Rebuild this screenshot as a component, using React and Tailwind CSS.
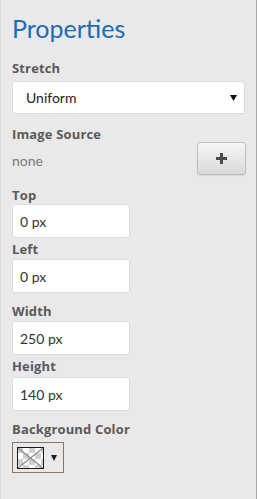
import React from 'react';

const Label = ({ children, className = '' }) => (
  <div
    className={`text-[13px] leading-[16px] font-bold text-[#595959] tracking-[0.15px] ${className}`}
    style={{ fontFamily: '"Open Sans", Lato, sans-serif' }}
  >
    {children}
  </div>
);

const TextBox = ({ value, className = '' }) => (
  <div
    className={`w-[118px] h-[34px] bg-white border border-[#dcdcdc] rounded-[3px] flex items-center pl-[7px] text-[14px] text-[#333] ${className}`}
  >
    {value}
  </div>
);

const Swatch = () => (
  <svg width="27" height="22" viewBox="0 0 27 22">
    {/* checker pattern */}
    <rect x="0" y="0" width="27" height="22" fill="#ffffff" />
    {[0, 1, 2, 3].map((r) =>
      [0, 1, 2, 3, 4].map((c) =>
        (r + c) % 2 === 0 ? (
          <rect key={`${r}-${c}`} x={c * 6} y={r * 6} width="6" height="6" fill="#cfcfcf" />
        ) : null
      )
    )}
    <line x1="1" y1="1" x2="26" y2="21" stroke="#8a8a8a" strokeWidth="1.3" />
    <line x1="26" y1="1" x2="1" y2="21" stroke="#8a8a8a" strokeWidth="1.3" />
    <rect x="0.5" y="0.5" width="26" height="21" fill="none" stroke="#1a1a1a" strokeWidth="1" />
  </svg>
);

export default function App() {
  return (
    <div
      className="w-[257px] h-[499px] bg-[#e9e9e9] border-l border-l-[#dadada] border-r border-r-[#a8a8a8] pl-[11px] pr-[10px]"
      style={{ fontFamily: 'Lato, "Open Sans", sans-serif' }}
    >
      <h1 className="pt-[13px] text-[25px] leading-[30px] text-[#1b6cb3] font-normal">Properties</h1>

      <Label className="mt-[17px]">Stretch</Label>
      <div className="mt-[5px] h-[33px] w-[233px] bg-white border border-[#dcdcdc] rounded-[3px] flex items-center justify-between pl-[13px] pr-[7px] text-[14px] text-[#222]">
        <span>Uniform</span>
        <svg width="7" height="6" viewBox="0 0 7 6">
          <path d="M0 0 L7 0 L3.5 6 Z" fill="#111" />
        </svg>
      </div>

      <Label className="mt-[12px]">Image Source</Label>
      <div className="h-[33px] flex items-center justify-between">
        <span className="text-[14px] text-[#7a7a7a] pt-[3px]">none</span>
        <button className="w-[49px] h-[33px] rounded-[3px] border border-[#bcbcbc] bg-gradient-to-b from-[#f7f7f7] to-[#d9d9d9] flex items-center justify-center shadow-[0_1px_1px_rgba(0,0,0,0.08)]">
          <svg width="11" height="11" viewBox="0 0 11 11">
            <rect x="4" y="0" width="3" height="11" fill="#4a4a4a" />
            <rect x="0" y="4" width="11" height="3" fill="#4a4a4a" />
          </svg>
        </button>
      </div>

      <Label className="mt-[12px]">Top</Label>
      <TextBox value="0 px" className="mt-[1px]" />
      <Label className="mt-[3px]">Left</Label>
      <TextBox value="0 px" className="mt-[2px]" />

      <Label className="mt-[10px]">Width</Label>
      <TextBox value="250 px" className="mt-[2px]" />
      <Label className="mt-[3px]">Height</Label>
      <TextBox value="140 px" className="mt-[3px]" />

      <Label className="mt-[10px]">Background Color</Label>
      <div className="mt-[5px] w-[52px] h-[31px] border border-[#8c7558] flex items-center pl-[4px] gap-[7px]">
        <Swatch />
        <svg width="6" height="6" viewBox="0 0 6 6">
          <path d="M0 0 L6 0 L3 6 Z" fill="#1a1a1a" />
        </svg>
      </div>
    </div>
  );
}
